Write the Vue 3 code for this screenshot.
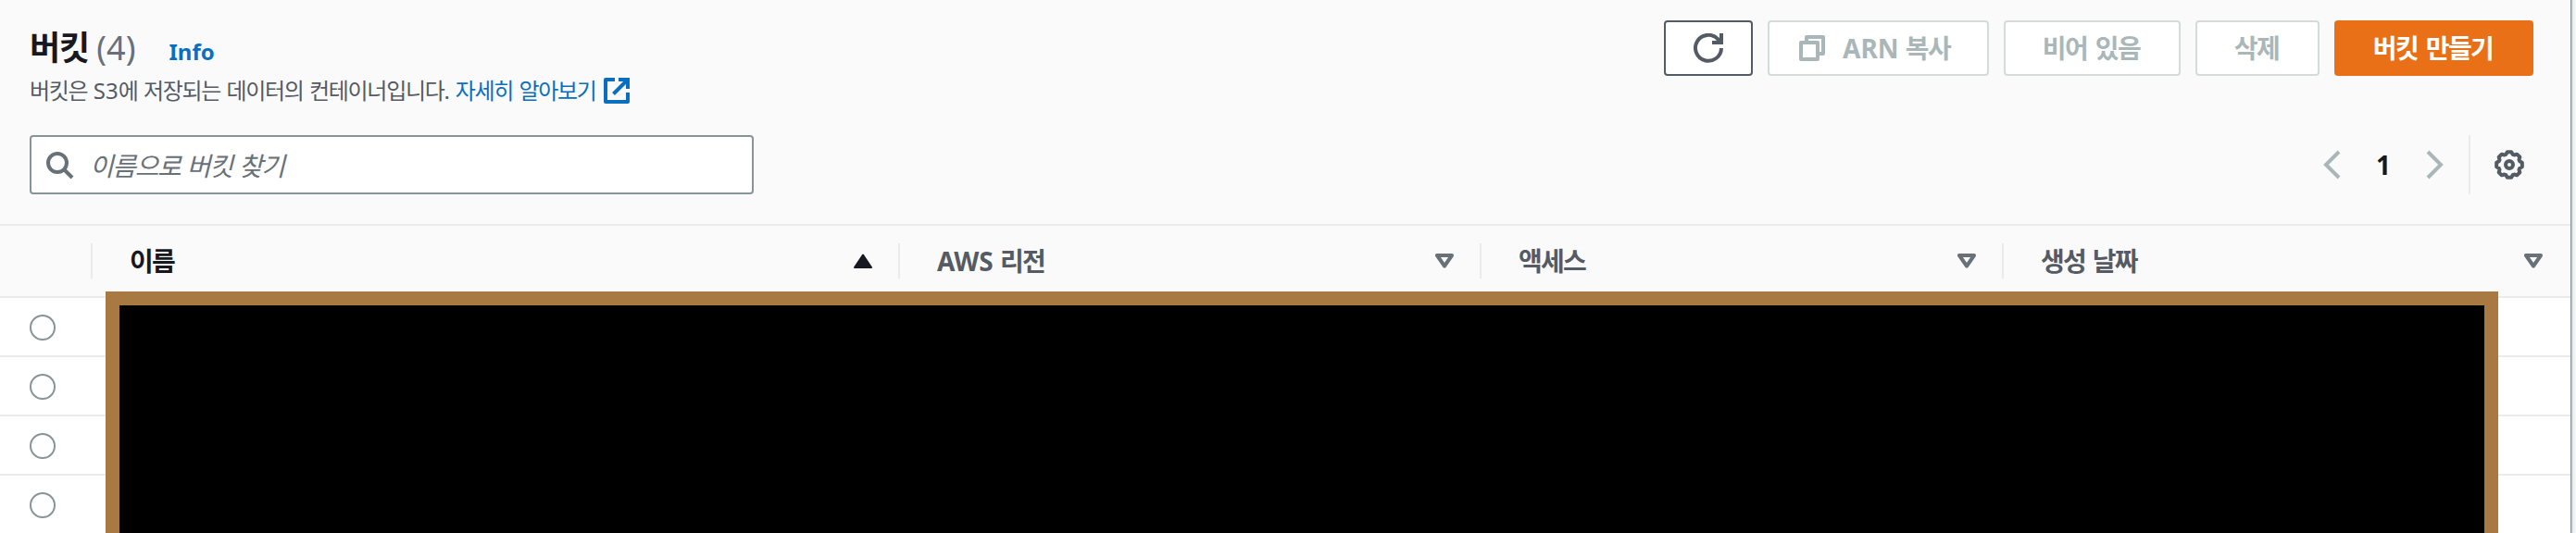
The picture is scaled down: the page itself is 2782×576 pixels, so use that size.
<script setup>
const columns = [
  { key: 'name', label: '이름', sorted: true },
  { key: 'region', en: 'AWS ', label: '리전' },
  { key: 'access', label: '액세스' },
  { key: 'created', label: '생성 날짜' },
]
const rows = [1, 2, 3, 4]

// Gear outline: eight teeth around a 32x32 box
const gearPoints = Array.from({ length: 8 }, (_, k) =>
  [[-9, 14], [9, 14], [18, 11.8], [27, 11.8]].map(([offset, r]) => {
    const a = ((k * 45 + offset) * Math.PI) / 180
    return `${(16 + r * Math.sin(a)).toFixed(2)},${(16 - r * Math.cos(a)).toFixed(2)}`
  }),
).flat().join(' ')
</script>

<template>
  <div class="page">
    <section class="panel">
      <header class="head">
        <div class="titles">
          <div class="title-row">
            <h1>버킷</h1><span class="count">(4)</span><a class="info">Info</a>
          </div>
          <p class="desc">
            <span>버킷은 <span class="en">S3</span>에 저장되는 데이터의 컨테이너입니다.</span>
            <a class="more">자세히 알아보기</a>
            <svg class="ext" width="28" height="28" viewBox="0 0 28 28" fill="none" stroke="currentColor" stroke-width="4" stroke-linejoin="round">
              <path d="M12 2H2v24h24V16" />
              <path d="M16 2h10v10M26 2L10.500 17.500" stroke-linejoin="miter" />
            </svg>
          </p>
        </div>
        <div class="actions">
          <button class="btn refresh">
            <svg width="32" height="32" viewBox="0 0 32 32" fill="none" stroke="currentColor" stroke-width="4">
              <path d="M30 16a14 14 0 1 1-4-10l2.500 3.500M30 0v10H20" />
            </svg>
          </button>
          <button class="btn off copy">
            <svg width="28" height="28" viewBox="0 0 28 28" fill="none" stroke="currentColor" stroke-width="4" stroke-linejoin="round">
              <path d="M2 8h18v18H2zM8 8V2h18v18h-6" />
            </svg>
            <span><span class="en">ARN </span>복사</span>
          </button>
          <button class="btn off empty">비어 있음</button>
          <button class="btn off del">삭제</button>
          <button class="btn primary">버킷 만들기</button>
        </div>
      </header>

      <div class="tools">
        <div class="search">
          <svg width="30" height="30" viewBox="0 0 30 30" fill="none" stroke="currentColor" stroke-width="4">
            <circle cx="12" cy="12" r="10" /><path d="M19 19l9 9" />
          </svg>
          <span class="ph">이름으로 버킷 찾기</span>
        </div>
        <div class="pager">
          <svg class="chev" width="20" height="32" viewBox="0 0 20 32" fill="none" stroke="currentColor" stroke-width="4">
            <path d="M18 2L4 16l14 14" />
          </svg>
          <span class="num">1</span>
          <svg class="chev" width="20" height="32" viewBox="0 0 20 32" fill="none" stroke="currentColor" stroke-width="4">
            <path d="M2 2l14 14L2 30" />
          </svg>
          <span class="bar"></span>
          <svg class="gear" width="32" height="32" viewBox="0 0 32 32" fill="none" stroke="currentColor" stroke-width="4" stroke-linejoin="round">
            <polygon :points="gearPoints" />
            <circle cx="16" cy="16" r="4" />
          </svg>
        </div>
      </div>

      <div class="table">
        <div class="row thead">
          <div class="cell pick"></div>
          <div v-for="c in columns" :key="c.key" class="cell" :class="[c.key, { sorted: c.sorted }]">
            <span><span v-if="c.en" class="en">{{ c.en }}</span>{{ c.label }}</span>
            <svg v-if="c.sorted" width="20" height="16" viewBox="0 0 20 16" fill="currentColor" stroke="currentColor" stroke-width="2" stroke-linejoin="round">
              <path d="M10 1.500L19 15H1z" />
            </svg>
            <svg v-else width="20" height="16" viewBox="0 0 20 16" fill="none" stroke="currentColor" stroke-width="4" stroke-linejoin="round">
              <path d="M2 2h16l-8 11.500z" />
            </svg>
          </div>
        </div>
        <div v-for="r in rows" :key="r" class="row body"><span class="radio"></span></div>
        <div class="mask"></div>
      </div>
    </section>
  </div>
</template>

<style>
html, body { margin: 0; overflow: hidden; }
</style>

<style scoped>
.page {
  height: 576px; background: #f2f3f3; overflow: hidden;
  font-family: "Noto Sans", "Noto Sans CJK KR", sans-serif; color: #545b64;
  letter-spacing: -1px; box-sizing: border-box;
}
.page * { box-sizing: border-box; }
.page svg { display: block; flex: none; }
.panel { width: 2776px; height: 576px; background: #fafafa; box-shadow: 1px 0 0 #879596, 2px 0 0 #c3cacb, 3px 0 0 #dfe3e3; }
.en { letter-spacing: 0; }
.head { display: flex; justify-content: space-between; height: 146px; padding: 22px 40px 0 32px; }
.title-row { display: flex; align-items: baseline; height: 56px; line-height: 60px; }
h1 { margin: 0; font-size: 36px; line-height: 60px; font-weight: 700; color: #16191f; }
.count { margin-left: 8px; font-size: 36px; color: #687078; letter-spacing: 0; }
.info { margin-left: 36px; font-size: 24px; font-weight: 700; color: #0a6fbe; letter-spacing: 0; }
.desc {
  display: flex; align-items: center; margin: 0; height: 40px; font-size: 24px; line-height: 40px;
  white-space: nowrap; letter-spacing: -1.3px; word-spacing: 1.5px;
}
.more { margin-left: 7px; color: #0a6fbe; }
.ext { margin-left: 8px; color: #0a6fbe; }
.actions { display: flex; gap: 16px; }
.btn {
  display: flex; align-items: center; justify-content: center; height: 60px; padding: 0 2px 0 0;
  border: 2px solid #545b64; border-radius: 4px; background: #fff; color: #545b64;
  font: 700 28px/56px "Noto Sans", "Noto Sans CJK KR", sans-serif; letter-spacing: -1.6px; word-spacing: 3px;
}
.off { border-color: #d5dbdb; color: #aab7b8; }
.refresh { width: 96px; padding: 0; }
.copy { width: 239px; justify-content: flex-start; padding: 0 0 0 32px; gap: 19px; word-spacing: 0; }
.empty { width: 191px; }
.del { width: 134px; }
.primary { width: 215px; border-color: #e97016; background: #e97016; color: #fff; }
.tools { display: flex; justify-content: space-between; height: 96px; padding: 0 50px 0 32px; }
.search {
  display: flex; align-items: center; width: 782px; height: 64px; padding-left: 16px;
  border: 2px solid #879596; border-radius: 4px; background: #fff; color: #687078;
}
.search svg { margin-top: 2px; }
.ph { margin-left: 17px; font-size: 28px; font-style: italic; letter-spacing: -1.4px; word-spacing: 1.5px; }
.pager { display: flex; align-items: center; height: 64px; color: #aab7b8; }
.num { width: 92px; text-align: center; font-size: 28px; font-weight: 700; letter-spacing: 0; color: #16191f; }
.bar { width: 2px; height: 64px; margin: 0 26px; background: #ebebeb; }
.gear { color: #545b64; }
.table { position: relative; }
.row { display: flex; align-items: center; }
.thead { height: 80px; border-top: 2px solid #ebebeb; border-bottom: 2px solid #ebebeb; }
.cell {
  display: flex; align-items: center; justify-content: space-between; height: 38px;
  padding: 0 28px 0 40px; border-right: 2px solid #ebebeb; font-size: 28px; line-height: 38px; font-weight: 700;
  letter-spacing: -1.7px;
}
.cell svg { color: #687078; }
.cell.sorted, .cell.sorted svg { color: #16191f; }
.pick { width: 100px; }
.name { width: 872px; }
.region { width: 628px; }
.access { width: 564px; }
.created { width: 612px; border-right-color: transparent; word-spacing: 2px; }
.body { height: 64px; padding: 2px 0 0 32px; border-bottom: 2px solid #ebebeb; background: #fff; }
.radio { width: 28px; height: 28px; border: 2px solid #879596; border-radius: 50%; background: #fff; }
.mask { position: absolute; left: 114px; top: 73px; width: 2584px; height: 300px; border: 15px solid #a87941; border-bottom: 0; background: #000; }
</style>
